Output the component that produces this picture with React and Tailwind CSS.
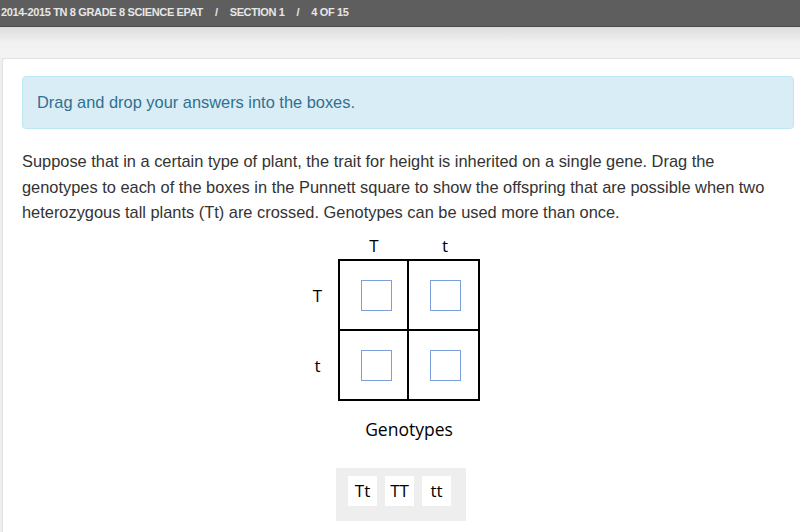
import React from 'react';

const arial = { fontFamily: '"Liberation Sans", Arial, sans-serif' };
const open = { fontFamily: '"Open Sans", "Noto Sans", sans-serif' };

function DropBox() {
  return (
    <div className="w-[68px] h-[68px] pl-[21px] pt-[19px]">
      <div className="w-[31px] h-[31px] border border-[#7b9fdb]" />
    </div>
  );
}

export default function App() {
  const tiles = ['Tt', 'TT', 'tt'];
  return (
    <div className="w-[800px] h-[532px] overflow-hidden bg-[#efefef]" style={arial}>
      <div className="h-[27px] bg-[#5e5e5e] border-b border-[#4a4a4a] flex items-center pl-[1px] pb-[2px] text-[11px] font-bold text-[#e6e6e6] tracking-[-0.35px]">
        <span>2014-2015 TN 8 GRADE 8 SCIENCE EPAT</span>
        <span className="mx-[12px]">/</span>
        <span>SECTION 1</span>
        <span className="mx-[12px]">/</span>
        <span>4 OF 15</span>
      </div>
      <div className="h-[31px] bg-gradient-to-b from-[#dcdcdc] via-[#f1f1f1] to-[#f3f3f3]" />
      <div className="ml-[2px] h-[474px] bg-white border-l border-t border-[#e2e2e2] rounded-tl-[3px] pt-[17px] pl-[19px]">
        <div className="w-[772px] border border-[#bce8f1] bg-[#d9edf7] rounded-[4px] py-[15px] pl-[14px] text-[16.4px] leading-[21px] text-[#31708f]">
          Drag and drop your answers into the boxes.
        </div>
        <p className="mt-[20px] w-[756px] text-[16.4px] leading-[25.5px] text-[#333333]">
          Suppose that in a certain type of plant, the trait for height is inherited on a single gene. Drag the genotypes to each of the boxes in the Punnett square to show the offspring that are possible when two heterozygous tall plants (Tt) are crossed. Genotypes can be used more than once.
        </p>
        <div className="ml-[283px] mt-[7px] text-[17px] text-black" style={open}>
          <div className="flex pl-[33px] h-[26px] items-center">
            <div className="w-[72px] text-center">T</div>
            <div className="w-[70px] text-center">t</div>
          </div>
          <div className="flex">
            <div className="w-[33px] flex flex-col pt-[2px]">
              <div className="h-[70px] flex items-center justify-center pr-[8px]">T</div>
              <div className="h-[70px] flex items-center justify-center pr-[8px]">t</div>
            </div>
            <div className="w-[142px] border-2 border-black grid grid-cols-2">
              <div className="border-r-2 border-b-2 border-black"><DropBox /></div>
              <div className="border-b-2 border-black"><DropBox /></div>
              <div className="border-r-2 border-black"><DropBox /></div>
              <div><DropBox /></div>
            </div>
          </div>
          <div className="w-[175px] text-center mt-[15px] pl-[33px] text-[17.5px]">Genotypes</div>
        </div>
        <div className="ml-[314px] mt-[26px] w-[130px] h-[53px] bg-[#eeeeee] flex items-start gap-[8px] pl-[12px] pt-[8px]" style={open}>
          {tiles.map((t) => (
            <div key={t} className="w-[29px] h-[30px] bg-white flex items-center justify-center text-[17px] text-black">
              {t}
            </div>
          ))}
        </div>
      </div>
    </div>
  );
}
